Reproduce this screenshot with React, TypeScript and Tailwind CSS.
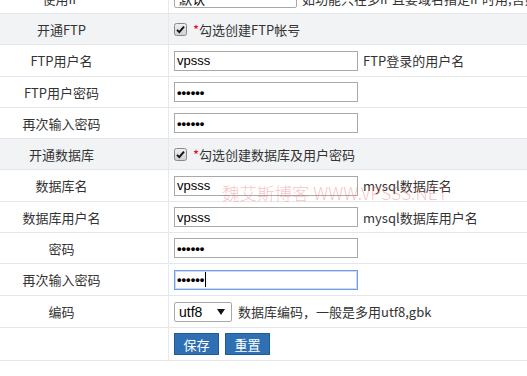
import React from "react";

const FONT = { fontFamily: '"Noto Sans CJK SC", "Liberation Sans", sans-serif' };

function Row({
  label,
  gray,
  h,
  children,
}: {
  label?: string;
  gray?: boolean;
  h: string;
  children?: React.ReactNode;
}) {
  return (
    <div className={`flex border-b border-[#e3e6ea] ${gray ? "bg-[#f2f3f5]" : "bg-white"} ${h}`}>
      <div className="w-[169px] shrink-0 border-r border-[#e6e8eb] pr-[45px] flex items-center justify-center text-[13px] text-[#333] leading-none">
        {label}
      </div>
      <div className="flex-1 min-w-0 pl-[5px] flex items-center text-[13px] text-[#333] leading-none whitespace-nowrap overflow-hidden">
        {children}
      </div>
    </div>
  );
}

function Field({ value, pwd, focus }: { value: string; pwd?: boolean; focus?: boolean }) {
  return (
    <div
      className={`w-[184px] h-[20px] shrink-0 border bg-white flex items-center px-[2px] text-[13px] text-black leading-none ${
        focus ? "border-[#6f9de0] shadow-[inset_0_0_0_1px_#c9dcf5]" : "border-[#a9a9a9]"
      }`}
      style={{ fontFamily: '"Liberation Sans", sans-serif' }}
    >
      <span className={pwd ? "font-bold text-[13px]" : ""}>{value}</span>
      {focus && <span className="ml-[1px] w-px h-[15px] bg-black" />}
    </div>
  );
}

function Check() {
  return (
    <svg width="13" height="13" viewBox="0 0 13 13" className="shrink-0">
      <defs>
        <linearGradient id="cbg" x1="0" y1="0" x2="0" y2="1">
          <stop offset="0" stopColor="#f0f0f0" />
          <stop offset="1" stopColor="#cfcfcf" />
        </linearGradient>
      </defs>
      <rect x="0.5" y="0.5" width="12" height="12" rx="2" fill="url(#cbg)" stroke="#8a8a8a" />
      <path d="M3 6.8 L5.3 9.2 L10 3.6" fill="none" stroke="#111" strokeWidth="1.9" />
    </svg>
  );
}

function Btn({ children }: { children: React.ReactNode }) {
  return (
    <div className="w-[45px] h-[22px] bg-[#2e70b2] border border-[#1f5c99] text-white text-[13px] flex items-center justify-center leading-none">
      {children}
    </div>
  );
}

export default function App() {
  return (
    <div className="relative w-[527px] h-[376px] overflow-hidden bg-white" style={FONT}>
      <div className="-mt-[17px]">
        <Row label="使用IP" h="h-[31px]">
          <div className="w-[123px] h-[20px] shrink-0 border border-[#a9a9a9] rounded-[2px] bg-white flex items-center px-[4px] text-black">
            默认
          </div>
          <span className="ml-[5px]">如功能只在多IP且要域名指定IP时用,否则请保持默认</span>
        </Row>
        <Row label="开通FTP" gray h="h-[31px]">
          <Check />
          <span className="ml-[6px] text-[#e4002b]">*</span>
          <span>勾选创建FTP帐号</span>
        </Row>
        <Row label="FTP用户名" h="h-[32px]">
          <Field value="vpsss" />
          <span className="ml-[5px]">FTP登录的用户名</span>
        </Row>
        <Row label="FTP用户密码" h="h-[31px]">
          <Field value="••••••" pwd />
        </Row>
        <Row label="再次输入密码" h="h-[31px]">
          <Field value="••••••" pwd />
        </Row>
        <Row label="开通数据库" gray h="h-[31px]">
          <Check />
          <span className="ml-[6px] text-[#e4002b]">*</span>
          <span>勾选创建数据库及用户密码</span>
        </Row>
        <Row label="数据库名" h="h-[32px]">
          <Field value="vpsss" />
          <span className="ml-[5px]">mysql数据库名</span>
        </Row>
        <Row label="数据库用户名" h="h-[31px]">
          <Field value="vpsss" />
          <span className="ml-[5px]">mysql数据库用户名</span>
        </Row>
        <Row label="密码" h="h-[31px]">
          <Field value="••••••" pwd />
        </Row>
        <Row label="再次输入密码" h="h-[32px]">
          <Field value="••••••" pwd focus />
        </Row>
        <Row label="编码" h="h-[32px]">
          <div
            className="w-[58px] h-[20px] shrink-0 border border-[#a9a9a9] rounded-[2px] bg-white flex items-center justify-between pl-[4px] pr-[6px] text-[14px] text-black"
            style={{ fontFamily: '"Liberation Sans", sans-serif' }}
          >
            <span>utf8</span>
            <svg width="8" height="6" viewBox="0 0 8 6">
              <path d="M0 0 H8 L4 6 Z" fill="#111" />
            </svg>
          </div>
          <span className="ml-[6px]">数据库编码，一般是多用utf8,gbk</span>
        </Row>
        <Row h="h-[33px]">
          <div className="flex gap-[6px]">
            <Btn>保存</Btn>
            <Btn>重置</Btn>
          </div>
        </Row>
      </div>
      <div
        className="absolute left-[222px] top-[184px] text-[17.5px] leading-none whitespace-nowrap text-[rgba(240,90,90,0.38)] font-light pointer-events-none"
        style={{ fontFamily: '"Noto Sans CJK SC", "Liberation Sans", sans-serif' }}
      >
        魏艾斯博客 WWW.VPSSS.NET
      </div>
    </div>
  );
}
